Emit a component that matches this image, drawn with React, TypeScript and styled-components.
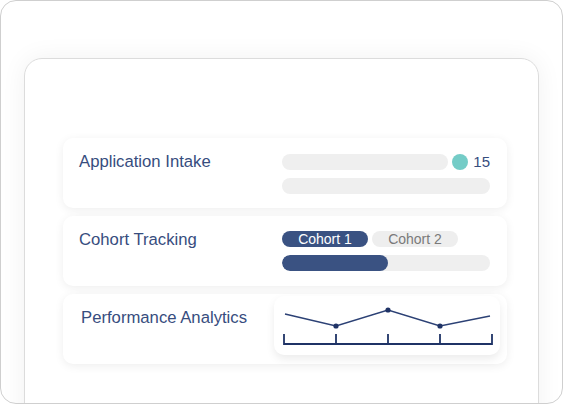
import React from 'react';
import styled, { createGlobalStyle } from 'styled-components';

const GlobalStyle = createGlobalStyle`
  body {
    margin: 0;
    background: #ffffff;
    font-family: 'Liberation Sans', Arial, Helvetica, sans-serif;
  }
`;

const Frame = styled.div`
  width: 563px;
  height: 404px;
  box-sizing: border-box;
  border: 1px solid #cfcfcf;
  border-radius: 16px;
  overflow: hidden;
  background: #ffffff;
  padding: 57px 23px 0 23px;
`;

const Panel = styled.div`
  width: 515px;
  height: 420px;
  box-sizing: border-box;
  border: 1px solid #dcdcdc;
  border-radius: 18px;
  background: #ffffff;
  box-shadow: 0 0 26px rgba(0, 0, 0, 0.06);
  padding: 79px 0 0 38px;
  display: flex;
  flex-direction: column;
  gap: 8px;
`;

const Card = styled.div`
  width: 444px;
  height: 70px;
  box-sizing: border-box;
  background: #ffffff;
  border-radius: 10px;
  box-shadow: 0 2px 10px rgba(0, 0, 0, 0.07);
  display: grid;
  grid-template-columns: 203px 1fr;
  padding: 0 17px 0 16px;
`;

const Title = styled.div<{ $shift?: number }>`
  padding-top: 16px;
  padding-left: ${p => p.$shift ?? 0}px;
  font-size: 16.7px;
  line-height: 16px;
  color: #374d7e;
  white-space: nowrap;
`;

const Stack = styled.div<{ $gap: number }>`
  padding-top: 16px;
  display: flex;
  flex-direction: column;
  gap: ${p => p.$gap}px;
`;

const Row = styled.div`
  display: flex;
  align-items: center;
  height: 16px;
`;

const Bar = styled.div`
  flex: 1 1 0;
  height: 16px;
  border-radius: 8px;
  background: #efefef;
  overflow: hidden;
`;

const Fill = styled.div`
  height: 100%;
  border-radius: 8px;
  background: #3a5282;
`;

const Dot = styled.span`
  flex: none;
  width: 16px;
  height: 16px;
  border-radius: 50%;
  background: #74ccc7;
  margin-left: 4px;
`;

const Count = styled.span`
  margin-left: 5px;
  font-size: 15px;
  line-height: 16px;
  color: #374d7e;
`;

const Pills = styled.div`
  display: flex;
  gap: 4px;
  margin-top: -1px;
`;

const Pill = styled.span<{ $active?: boolean }>`
  width: 86px;
  height: 16px;
  border-radius: 8px;
  display: flex;
  align-items: center;
  justify-content: center;
  font-size: 14px;
  line-height: 16px;
  background: ${p => (p.$active ? '#3a5282' : '#eeeeee')};
  color: ${p => (p.$active ? '#ffffff' : '#7a7a7a')};
`;

const ChartBox = styled.div`
  margin: 2px 7px 0 -8px;
  height: 59px;
  border-radius: 10px;
  background: #ffffff;
  box-shadow: 0 4px 8px rgba(0, 0, 0, 0.08);
`;

const navy = '#1f3366';

const Chart = () => (
  <svg width="226" height="59" viewBox="0 0 226 59">
    <polyline
      points="11,18 62,30 114,14 166,30 216,20"
      fill="none"
      stroke="#2c4175"
      strokeWidth="1.4"
    />
    <circle cx="62" cy="30" r="2.6" fill={navy} />
    <circle cx="114" cy="14" r="2.6" fill={navy} />
    <circle cx="166" cy="30" r="2.6" fill={navy} />
    <path
      d="M10 48 H218 M10 38 V49 M62 38 V48 M114 38 V48 M166 38 V48 M218 38 V49"
      fill="none"
      stroke={navy}
      strokeWidth="1.8"
    />
  </svg>
);

export default function App() {
  const progress = 51;
  return (
    <>
      <GlobalStyle />
      <Frame>
        <Panel>
          <Card>
            <Title>Application Intake</Title>
            <Stack $gap={8}>
              <Row>
                <Bar />
                <Dot />
                <Count>15</Count>
              </Row>
              <Row>
                <Bar />
              </Row>
            </Stack>
          </Card>
          <Card>
            <Title>Cohort Tracking</Title>
            <Stack $gap={8}>
              <Pills>
                <Pill $active>Cohort 1</Pill>
                <Pill>Cohort 2</Pill>
              </Pills>
              <Row>
                <Bar>
                  <Fill style={{ width: `${progress}%` }} />
                </Bar>
              </Row>
            </Stack>
          </Card>
          <Card>
            <Title $shift={2}>Performance Analytics</Title>
            <ChartBox>
              <Chart />
            </ChartBox>
          </Card>
        </Panel>
      </Frame>
    </>
  );
}
